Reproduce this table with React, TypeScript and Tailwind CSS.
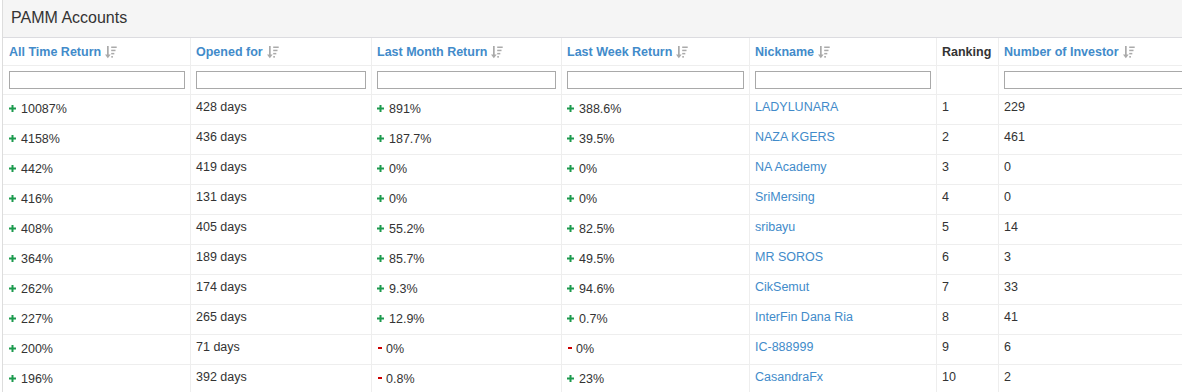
import React from "react";

const SortIcon = () => (
  <svg width="12" height="14" viewBox="0 0 12 14" className="ml-[4px] shrink-0" fill="#aaaaaa">
    <rect x="2" y="1" width="1.7" height="9" />
    <polygon points="0,9.5 5.7,9.5 2.85,13.2" />
    <rect x="6.2" y="1.5" width="5.5" height="1.5" />
    <rect x="6.2" y="4.7" width="4.3" height="1.5" />
    <rect x="6.2" y="7.9" width="3.1" height="1.5" />
    <rect x="6.2" y="11.1" width="1.8" height="1.5" />
  </svg>
);

const rows: [string, string, string, string, string, string, string, string, string, string][] = [
  ["+", "10087%", "428 days", "+", "891%", "+", "388.6%", "LADYLUNARA", "1", "229"],
  ["+", "4158%", "436 days", "+", "187.7%", "+", "39.5%", "NAZA KGERS", "2", "461"],
  ["+", "442%", "419 days", "+", "0%", "+", "0%", "NA Academy", "3", "0"],
  ["+", "416%", "131 days", "+", "0%", "+", "0%", "SriMersing", "4", "0"],
  ["+", "408%", "405 days", "+", "55.2%", "+", "82.5%", "sribayu", "5", "14"],
  ["+", "364%", "189 days", "+", "85.7%", "+", "49.5%", "MR SOROS", "6", "3"],
  ["+", "262%", "174 days", "+", "9.3%", "+", "94.6%", "CikSemut", "7", "33"],
  ["+", "227%", "265 days", "+", "12.9%", "+", "0.7%", "InterFin Dana Ria", "8", "41"],
  ["+", "200%", "71 days", "-", "0%", "-", "0%", "IC-888999", "9", "6"],
  ["+", "196%", "392 days", "-", "0.8%", "+", "23%", "CasandraFx", "10", "2"],
];

const widths = ["w-[187px]", "w-[181px]", "w-[190px]", "w-[188px]", "w-[187px]", "w-[62px]", "w-[230px]"];

const cellBase = (i: number) =>
  `${widths[i]} shrink-0 ${i === 0 ? "pl-[6px] pr-[5px]" : "border-l border-[#eeeeee] px-[5px]"}`;

const Sign = ({ s, v }: { s: string; v: string }) => (
  <span className="flex items-start">
    {s === "+" ? (
      <svg width="7" height="7" viewBox="0 0 7 7" className="mt-[4.5px] mr-[5px] shrink-0" fill="#1c9a4e">
        <rect x="2.5" y="0" width="2" height="7" />
        <rect x="0" y="2.5" width="7" height="2" />
      </svg>
    ) : (
      <svg width="4" height="2" viewBox="0 0 4 2" className="mt-[7px] mr-[4px] ml-[1px] shrink-0" fill="#cc0000">
        <rect x="0" y="0" width="4" height="2" />
      </svg>
    )}
    <span>{v}</span>
  </span>
);

export default function App() {
  const headers: { label: string; sort: boolean }[] = [
    { label: "All Time Return", sort: true },
    { label: "Opened for", sort: true },
    { label: "Last Month Return", sort: true },
    { label: "Last Week Return", sort: true },
    { label: "Nickname", sort: true },
    { label: "Ranking", sort: false },
    { label: "Number of Investor", sort: true },
  ];
  return (
    <div
      className="w-[1182px] h-[392px] overflow-hidden bg-white pl-[2px] text-[#333333]"
      style={{ fontFamily: '"Liberation Sans", Arial, sans-serif' }}
    >
      <div className="border-l border-[#dddddd] w-[1300px]">
        <div className="h-[38px] bg-[#f5f5f5] border-b border-[#dcdce0] pl-[8px] flex items-center pb-[1px]">
          <span className="text-[16px]">PAMM Accounts</span>
        </div>
        {/* header row */}
        <div className="flex h-[27px] text-[12.5px] font-bold">
          {headers.map((h, i) => (
            <div key={i} className={`${cellBase(i)} flex items-center pt-[1px]`}>
              <span className={h.sort ? "text-[#428bca]" : "text-[#333333]"}>{h.label}</span>
              {h.sort && <SortIcon />}
            </div>
          ))}
        </div>
        {/* filter row */}
        <div className="flex h-[29px] border-t border-[#eeeeee]">
          {headers.map((h, i) => (
            <div key={i} className={`${cellBase(i)} pt-[5px]`}>
              {h.sort && (
                <input
                  type="text"
                  className="block w-full h-[18px] border border-[#a9a9a9] bg-white outline-none"
                />
              )}
            </div>
          ))}
        </div>
        {rows.map((r, ri) => (
          <div key={ri} className="flex h-[30px] border-t border-[#eeeeee] text-[12.5px] leading-[18px]">
            <div className={`${cellBase(0)} pt-[5px]`}>
              <Sign s={r[0]} v={r[1]} />
            </div>
            <div className={`${cellBase(1)} pt-[3px]`}>{r[2]}</div>
            <div className={`${cellBase(2)} pt-[5px]`}>
              <Sign s={r[3]} v={r[4]} />
            </div>
            <div className={`${cellBase(3)} pt-[5px]`}>
              <Sign s={r[5]} v={r[6]} />
            </div>
            <div className={`${cellBase(4)} pt-[3px]`}>
              <span className="text-[#428bca]">{r[7]}</span>
            </div>
            <div className={`${cellBase(5)} pt-[3px]`}>{r[8]}</div>
            <div className={`${cellBase(6)} pt-[3px]`}>{r[9]}</div>
          </div>
        ))}
      </div>
    </div>
  );
}
